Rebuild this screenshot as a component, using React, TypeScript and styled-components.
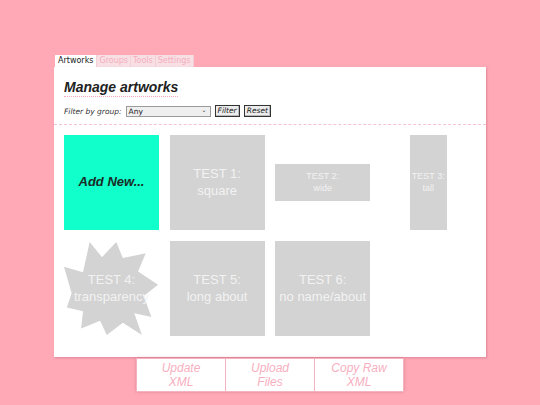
import React from "react";
import styled, { createGlobalStyle, css } from "styled-components";

const Global = createGlobalStyle`
  html, body {
    margin: 0;
    padding: 0;
    background: #ffa9b6;
    height: 405px;
    overflow: hidden;
  }
  #root {
    min-height: 405px;
  }
`;

const Page = styled.div`
  width: 432px;
  margin: 0 auto;
  padding-top: 55px;
  display: flex;
  flex-direction: column;
  align-items: stretch;
`;

const TabBar = styled.div`
  display: flex;
  height: 12px;
  padding-left: 1px;
`;

const Tab = styled.div<{ $active?: boolean }>`
  font-family: "DejaVu Sans", Verdana, sans-serif;
  font-size: 8px;
  line-height: 12px;
  padding: ${(p) => (p.$active ? "0 3px" : "0 2px")};
  border-right: 1px solid #f3d0d7;
  background: ${(p) => (p.$active ? "#ffffff" : "#f8dfe4")};
  color: ${(p) => (p.$active ? "#222222" : "#f5aebd")};
`;

const Panel = styled.div`
  background: #ffffff;
  height: 290px;
  box-shadow: 1px 1px 2px rgba(160, 70, 90, 0.35);
  display: flex;
  flex-direction: column;
`;

const Header = styled.div`
  padding: 11px 10px 0;
  border-bottom: 1px dashed #f6c4ce;
  height: 58px;
  box-sizing: border-box;
`;

const Title = styled.h1`
  margin: 0;
  font-family: "Liberation Sans", Arial, sans-serif;
  font-size: 14px;
  font-weight: bold;
  font-style: italic;
  color: #222222;
  line-height: 16px;
  display: inline-block;
  border-bottom: 1px dotted #f5a9ba;
  padding-bottom: 1px;
`;

const FilterRow = styled.div`
  display: flex;
  align-items: center;
  margin-top: 8px;
  gap: 4px;
  font-family: "DejaVu Sans", Verdana, sans-serif;
  font-size: 7.5px;
  color: #333333;
`;

const FilterLabel = styled.span`
  font-style: italic;
`;

const Select = styled.div`
  width: 85px;
  height: 11px;
  box-sizing: border-box;
  border: 1px solid #9a9a9a;
  background: #efefef;
  display: flex;
  align-items: center;
  justify-content: space-between;
  padding: 0 3px 0 2px;
  font-size: 7.5px;
  color: #222;
`;

const Caret = styled.span`
  font-size: 6px;
  line-height: 6px;
  color: #444;
  margin-top: -3px;
`;

const SmallButton = styled.div`
  height: 12px;
  box-sizing: border-box;
  border: 1px solid #333333;
  background: #ececec;
  font-style: italic;
  font-size: 7.5px;
  line-height: 10px;
  padding: 0 2px;
  color: #222;
  box-shadow: inset -1px -1px 0 #bbb;
`;

const Grid = styled.div`
  display: grid;
  grid-template-columns: repeat(4, 95px);
  grid-auto-rows: 95px;
  column-gap: 10.6px;
  row-gap: 11px;
  padding: 10px 10px 0;
`;

const Cell = styled.div`
  display: flex;
  align-items: center;
  justify-content: center;
`;

type Shape = "square" | "wide" | "tall" | "star";

/* jagged burst drawn behind the label so the text itself is never clipped */
const starBurst = css`
  position: relative;
  background: transparent;
  isolation: isolate;
  &::before {
    content: "";
    position: absolute;
    inset: 0;
    z-index: -1;
    background: #d3d3d3;
    clip-path: polygon(
      27% 1%, 40% 17%, 55% 1%, 62% 18%, 86% 13%, 78% 32%, 99% 46%, 84% 58%,
      92% 80%, 74% 76%, 82% 99%, 62% 86%, 45% 99%, 38% 84%, 18% 92%, 20% 74%,
      3% 70%, 8% 55%, 0% 27%, 20% 33%
    );
  }
`;

const Tile = styled.div<{ $shape: Shape; $add?: boolean }>`
  display: flex;
  flex-direction: column;
  align-items: center;
  justify-content: center;
  text-align: center;
  font-family: "Liberation Sans", Arial, sans-serif;
  background: ${(p) => (p.$add ? "#10ffcb" : "#d3d3d3")};
  color: ${(p) => (p.$add ? "#1b2b27" : "#f2f2f2")};
  width: ${(p) => (p.$shape === "tall" ? "37px" : "95px")};
  height: ${(p) => (p.$shape === "wide" ? "37px" : "95px")};
  font-size: ${(p) => (p.$shape === "wide" || p.$shape === "tall" ? "9px" : "13px")};
  line-height: 1.28;
  ${(p) =>
    p.$add &&
    css`
      font-weight: bold;
      font-style: italic;
    `}
  ${(p) => p.$shape === "star" && starBurst}
`;

const BottomBar = styled.div`
  align-self: center;
  display: flex;
  margin-top: 1px;
  box-shadow: 0 0 3px rgba(190, 90, 110, 0.45);
`;

const ActionButton = styled.div`
  width: 88px;
  height: 32px;
  background: #ffffff;
  border: 1px solid #f5b3c1;
  margin-left: -1px;
  display: flex;
  align-items: center;
  justify-content: center;
  text-align: center;
  font-family: "Liberation Sans", Arial, sans-serif;
  font-style: italic;
  font-size: 12px;
  line-height: 14px;
  color: #f7afc0;
  &:first-child {
    margin-left: 0;
  }
`;

const tiles: { shape: Shape; lines: string[]; add?: boolean }[] = [
  { shape: "square", lines: ["Add New..."], add: true },
  { shape: "square", lines: ["TEST 1:", "square"] },
  { shape: "wide", lines: ["TEST 2:", "wide"] },
  { shape: "tall", lines: ["TEST 3:", "tall"] },
  { shape: "star", lines: ["TEST 4:", "transparency"] },
  { shape: "square", lines: ["TEST 5:", "long about"] },
  { shape: "square", lines: ["TEST 6:", "no name/about"] },
];

export default function App() {
  return (
    <>
      <Global />
      <Page>
        <TabBar>
          <Tab $active>Artworks</Tab>
          <Tab>Groups</Tab>
          <Tab>Tools</Tab>
          <Tab>Settings</Tab>
        </TabBar>
        <Panel>
          <Header>
            <Title>Manage artworks</Title>
            <FilterRow>
              <FilterLabel>Filter by group:</FilterLabel>
              <Select>
                <span>Any</span>
                <Caret>⌄</Caret>
              </Select>
              <SmallButton>Filter</SmallButton>
              <SmallButton>Reset</SmallButton>
            </FilterRow>
          </Header>
          <Grid>
            {tiles.map((t, i) => (
              <Cell key={i}>
                <Tile $shape={t.shape} $add={t.add}>
                  {t.lines.map((l, j) => (
                    <span key={j}>{l}</span>
                  ))}
                </Tile>
              </Cell>
            ))}
          </Grid>
        </Panel>
        <BottomBar>
          <ActionButton>
            Update
            <br />
            XML
          </ActionButton>
          <ActionButton>
            Upload
            <br />
            Files
          </ActionButton>
          <ActionButton>
            Copy Raw
            <br />
            XML
          </ActionButton>
        </BottomBar>
      </Page>
    </>
  );
}
